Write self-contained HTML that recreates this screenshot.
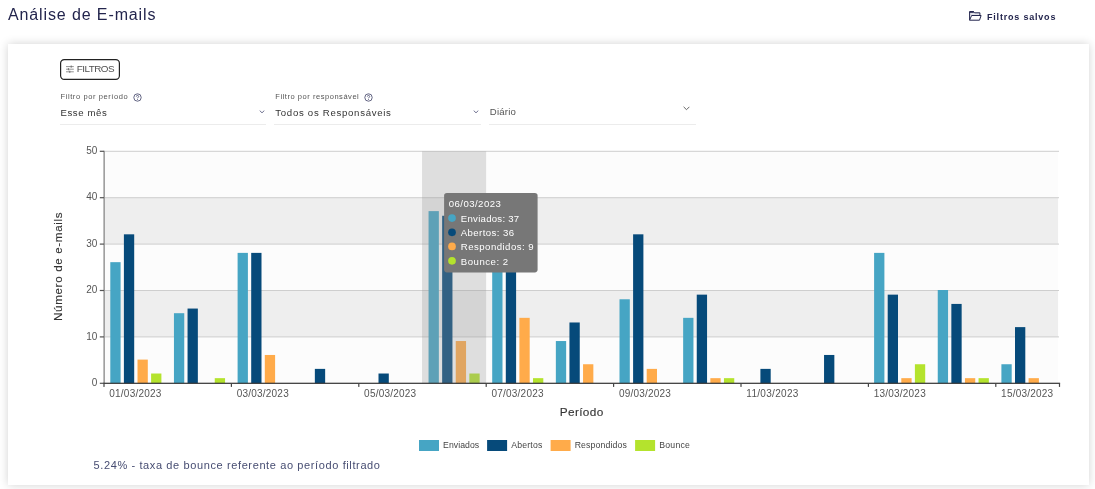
<!DOCTYPE html>
<html lang="pt-BR">
<head>
<meta charset="utf-8">
<title>Análise de E-mails</title>
<style>
html,body{margin:0;padding:0;background:#fff;}
body{width:1095px;height:489px;position:relative;overflow:hidden;font-family:"Liberation Sans", sans-serif;color:#333;}
#root{position:absolute;left:0;top:0;width:1095px;height:489px;will-change:transform;}
.abs{position:absolute;white-space:nowrap;line-height:1;}
h1.title{margin:0;font-weight:400;font-size:16px;color:#23254d;left:8px;top:7.3px;letter-spacing:0.882px}
.saved{left:969px;top:10px;height:12px;color:#23254d;}
.saved span{position:absolute;left:18px;top:3.1px;font-size:9px;font-weight:700;line-height:1;letter-spacing:0.798px}
.card{position:absolute;left:8px;top:44px;width:1081px;height:441px;background:#fff;box-shadow:0 0 9px rgba(0,0,0,.18);}
.btn{left:60px;top:59px;width:60px;height:21px;}
.btn span{position:absolute;left:16.7px;top:4.6px;font-size:9.9px;color:#505050;line-height:1;letter-spacing:-0.530px}
.lbl{font-size:7.5px;color:#555;}
.val{font-size:9.6px;color:#333;}
.ul{position:absolute;height:1px;background:#ececec;}
svg.chart{position:absolute;left:0;top:0;}
svg text{font-family:"Liberation Sans", sans-serif;}
.ax{font-size:10px;fill:#555;}
.ay{font-size:10px;fill:#555;}
.at{font-size:11.6px;fill:#333;stroke:#333;stroke-width:0.12px;}
.atx{font-size:11.8px;fill:#333;stroke:#333;stroke-width:0.12px;}
.lg{font-size:8.7px;fill:#444;}
.tt{font-size:9.6px;fill:#fff;}
.foot{left:93.5px;top:459.7px;font-size:11px;color:#474d72;letter-spacing:0.617px}
</style>
</head>
<body>
<div id="root">
<h1 class="abs title" id="title">Análise de E-mails</h1>
<div class="abs saved">
<svg width="13" height="11" viewBox="0 0 13 11" style="position:absolute;left:0;top:0.5px"><path d="M0.6 9.2V0.9h4.2l0.8 0.9h5.3v2.7h1.2l-1.6 4.7z" fill="#e3e3ea" stroke="none"/><path d="M0.6 4.5l2-0h9.5l-1.6 4.7H0.6z" fill="#fff" stroke="none"/><path d="M0.6 9.2V0.9h4.2l0.8 0.9h5.3v2.7M0.6 0.9h4.2" fill="none" stroke="#23254d" stroke-width="1" stroke-linejoin="round"/><path d="M0.6 9.2l2-4.7h9.5l-1.6 4.7z" fill="#fff" stroke="#23254d" stroke-width="1" stroke-linejoin="round"/><path d="M0.5 0.8h4.2" stroke="#23254d" stroke-width="1.4"/></svg>
<span id="saved">Filtros salvos</span>
</div>
<div class="card"></div>
<div class="abs btn">
<svg width="60" height="21" viewBox="0 0 60 21" style="position:absolute;left:0;top:0"><rect x="0.6" y="0.6" width="58.8" height="19.8" rx="3.6" ry="3.6" fill="#fff" stroke="#222" stroke-width="1.2"/><g stroke="#666" stroke-width="0.7" fill="none"><path d="M6 7.6h7.8M6 10.2h7.8M6 12.8h7.8"/><path d="M11.2 6.5v2.2M8.4 9.1v2.2M9.8 11.7v2.2" stroke-width="0.9"/></g></svg>
<span id="btn">FILTROS</span>
</div>

<div class="abs lbl" id="l1" style="left:60.5px;top:93.3px;letter-spacing:0.593px">Filtro por período</div>
<svg class="abs" width="9" height="9" viewBox="0 0 9 9" style="left:132.7px;top:92.8px"><circle cx="4.5" cy="4.5" r="3.7" fill="none" stroke="#3d4066" stroke-width="0.8"/><path d="M3.3 3.6c0-.8.6-1.2 1.2-1.2s1.2.4 1.2 1.1c0 .8-1.2.9-1.2 1.8M4.5 6.2v.8" fill="none" stroke="#3d4066" stroke-width="0.8"/></svg>
<div class="abs val" id="v1" style="left:60.5px;top:107.8px;letter-spacing:0.580px">Esse mês</div>
<svg class="abs" width="6" height="4" viewBox="0 0 6 4" style="left:258.6px;top:109.8px"><path d="M0.7 0.6L3 2.8l2.3-2.2" fill="none" stroke="#4a4d73" stroke-width="0.8"/></svg>
<div class="ul" style="left:60px;top:124px;width:206px"></div>

<div class="abs lbl" id="l2" style="left:275.3px;top:93.3px;letter-spacing:0.541px">Filtro por responsável</div>
<svg class="abs" width="9" height="9" viewBox="0 0 9 9" style="left:363.7px;top:92.8px"><circle cx="4.5" cy="4.5" r="3.7" fill="none" stroke="#3d4066" stroke-width="0.8"/><path d="M3.3 3.6c0-.8.6-1.2 1.2-1.2s1.2.4 1.2 1.1c0 .8-1.2.9-1.2 1.8M4.5 6.2v.8" fill="none" stroke="#3d4066" stroke-width="0.8"/></svg>
<div class="abs val" id="v2" style="left:275.3px;top:107.8px;letter-spacing:0.714px">Todos os Responsáveis</div>
<svg class="abs" width="6" height="4" viewBox="0 0 6 4" style="left:473.2px;top:109.8px"><path d="M0.7 0.6L3 2.8l2.3-2.2" fill="none" stroke="#4a4d73" stroke-width="0.8"/></svg>
<div class="ul" style="left:274px;top:124px;width:207px"></div>

<div class="abs val" id="v3" style="left:489.8px;top:107.2px;color:#555;letter-spacing:0.188px">Diário</div>
<svg class="abs" width="7" height="5" viewBox="0 0 7 5" style="left:683px;top:106px"><path d="M0.6 0.8L3.5 3.7l2.9-2.9" fill="none" stroke="#666" stroke-width="1"/></svg>
<div class="ul" style="left:489px;top:124px;width:207px"></div>

<svg class="chart" width="1095" height="489" viewBox="0 0 1095 489">
<rect x="104.0" y="151.30" width="954.10" height="46.40" fill="#fcfcfc"/>
<rect x="104.0" y="197.70" width="954.10" height="46.40" fill="#eeeeee"/>
<rect x="104.0" y="244.10" width="954.10" height="46.40" fill="#fcfcfc"/>
<rect x="104.0" y="290.50" width="954.10" height="46.40" fill="#eeeeee"/>
<rect x="104.0" y="336.90" width="954.10" height="46.40" fill="#fcfcfc"/>
<rect x="104.0" y="336.40" width="955.00" height="1" fill="#cecece"/>
<rect x="104.0" y="290.00" width="955.00" height="1" fill="#cecece"/>
<rect x="104.0" y="243.60" width="955.00" height="1" fill="#cecece"/>
<rect x="104.0" y="197.20" width="955.00" height="1" fill="#cecece"/>
<rect x="104.0" y="150.80" width="955.00" height="1" fill="#cecece"/>
<rect x="110.30" y="262.16" width="10.3" height="121.14" fill="#46a5c4"/>
<rect x="123.90" y="234.32" width="10.3" height="148.98" fill="#064a7a"/>
<rect x="137.50" y="359.60" width="10.3" height="23.70" fill="#ffab4a"/>
<rect x="151.10" y="373.52" width="10.3" height="9.78" fill="#b4e32d"/>
<rect x="173.95" y="313.20" width="10.3" height="70.10" fill="#46a5c4"/>
<rect x="187.55" y="308.56" width="10.3" height="74.74" fill="#064a7a"/>
<rect x="214.75" y="378.16" width="10.3" height="5.14" fill="#b4e32d"/>
<rect x="237.60" y="252.88" width="10.3" height="130.42" fill="#46a5c4"/>
<rect x="251.20" y="252.88" width="10.3" height="130.42" fill="#064a7a"/>
<rect x="264.80" y="354.96" width="10.3" height="28.34" fill="#ffab4a"/>
<rect x="314.85" y="368.88" width="10.3" height="14.42" fill="#064a7a"/>
<rect x="378.50" y="373.52" width="10.3" height="9.78" fill="#064a7a"/>
<rect x="428.55" y="211.12" width="10.3" height="172.18" fill="#46a5c4"/>
<rect x="442.15" y="215.76" width="10.3" height="167.54" fill="#064a7a"/>
<rect x="455.75" y="341.04" width="10.3" height="42.26" fill="#ffab4a"/>
<rect x="469.35" y="373.52" width="10.3" height="9.78" fill="#b4e32d"/>
<rect x="492.20" y="238.96" width="10.3" height="144.34" fill="#46a5c4"/>
<rect x="505.80" y="225.04" width="10.3" height="158.26" fill="#064a7a"/>
<rect x="519.40" y="317.84" width="10.3" height="65.46" fill="#ffab4a"/>
<rect x="533.00" y="378.16" width="10.3" height="5.14" fill="#b4e32d"/>
<rect x="555.85" y="341.04" width="10.3" height="42.26" fill="#46a5c4"/>
<rect x="569.45" y="322.48" width="10.3" height="60.82" fill="#064a7a"/>
<rect x="583.05" y="364.24" width="10.3" height="19.06" fill="#ffab4a"/>
<rect x="619.50" y="299.28" width="10.3" height="84.02" fill="#46a5c4"/>
<rect x="633.10" y="234.32" width="10.3" height="148.98" fill="#064a7a"/>
<rect x="646.70" y="368.88" width="10.3" height="14.42" fill="#ffab4a"/>
<rect x="683.15" y="317.84" width="10.3" height="65.46" fill="#46a5c4"/>
<rect x="696.75" y="294.64" width="10.3" height="88.66" fill="#064a7a"/>
<rect x="710.35" y="378.16" width="10.3" height="5.14" fill="#ffab4a"/>
<rect x="723.95" y="378.16" width="10.3" height="5.14" fill="#b4e32d"/>
<rect x="760.40" y="368.88" width="10.3" height="14.42" fill="#064a7a"/>
<rect x="824.05" y="354.96" width="10.3" height="28.34" fill="#064a7a"/>
<rect x="874.10" y="252.88" width="10.3" height="130.42" fill="#46a5c4"/>
<rect x="887.70" y="294.64" width="10.3" height="88.66" fill="#064a7a"/>
<rect x="901.30" y="378.16" width="10.3" height="5.14" fill="#ffab4a"/>
<rect x="914.90" y="364.24" width="10.3" height="19.06" fill="#b4e32d"/>
<rect x="937.75" y="290.00" width="10.3" height="93.30" fill="#46a5c4"/>
<rect x="951.35" y="303.92" width="10.3" height="79.38" fill="#064a7a"/>
<rect x="964.95" y="378.16" width="10.3" height="5.14" fill="#ffab4a"/>
<rect x="978.55" y="378.16" width="10.3" height="5.14" fill="#b4e32d"/>
<rect x="1001.40" y="364.24" width="10.3" height="19.06" fill="#46a5c4"/>
<rect x="1015.00" y="327.12" width="10.3" height="56.18" fill="#064a7a"/>
<rect x="1028.60" y="378.16" width="10.3" height="5.14" fill="#ffab4a"/>
<rect x="422.05" y="151.30" width="64.10" height="232.00" fill="#999" fill-opacity="0.3"/>
<rect x="103.40" y="150.80" width="1.5" height="232.50" fill="#969696"/>
<rect x="103.40" y="382.70" width="956.70" height="1.2" fill="#333"/>
<rect x="99.80" y="382.70" width="4.2" height="1.2" fill="#555"/>
<text x="97.3" y="385.90" text-anchor="end" class="ay">0</text>
<rect x="99.80" y="336.30" width="4.2" height="1.2" fill="#555"/>
<text x="97.3" y="339.50" text-anchor="end" class="ay">10</text>
<rect x="99.80" y="289.90" width="4.2" height="1.2" fill="#555"/>
<text x="97.3" y="293.10" text-anchor="end" class="ay">20</text>
<rect x="99.80" y="243.50" width="4.2" height="1.2" fill="#555"/>
<text x="97.3" y="246.70" text-anchor="end" class="ay">30</text>
<rect x="99.80" y="197.10" width="4.2" height="1.2" fill="#555"/>
<text x="97.3" y="200.30" text-anchor="end" class="ay">40</text>
<rect x="99.80" y="150.70" width="4.2" height="1.2" fill="#555"/>
<text x="97.3" y="153.90" text-anchor="end" class="ay">50</text>
<rect x="103.40" y="383.30" width="1.2" height="3.6" fill="#444"/>
<text x="109.30" y="396.5" class="ax" textLength="52" lengthAdjust="spacing">01/03/2023</text>
<rect x="230.80" y="383.30" width="1.2" height="3.6" fill="#444"/>
<text x="236.70" y="396.5" class="ax" textLength="52" lengthAdjust="spacing">03/03/2023</text>
<rect x="358.20" y="383.30" width="1.2" height="3.6" fill="#444"/>
<text x="364.10" y="396.5" class="ax" textLength="52" lengthAdjust="spacing">05/03/2023</text>
<rect x="485.60" y="383.30" width="1.2" height="3.6" fill="#444"/>
<text x="491.50" y="396.5" class="ax" textLength="52" lengthAdjust="spacing">07/03/2023</text>
<rect x="613.00" y="383.30" width="1.2" height="3.6" fill="#444"/>
<text x="618.90" y="396.5" class="ax" textLength="52" lengthAdjust="spacing">09/03/2023</text>
<rect x="740.40" y="383.30" width="1.2" height="3.6" fill="#444"/>
<text x="746.30" y="396.5" class="ax" textLength="52" lengthAdjust="spacing">11/03/2023</text>
<rect x="867.80" y="383.30" width="1.2" height="3.6" fill="#444"/>
<text x="873.70" y="396.5" class="ax" textLength="52" lengthAdjust="spacing">13/03/2023</text>
<rect x="995.20" y="383.30" width="1.2" height="3.6" fill="#444"/>
<text x="1001.10" y="396.5" class="ax" textLength="52" lengthAdjust="spacing">15/03/2023</text>
<rect x="1058.90" y="383.30" width="1.2" height="3.6" fill="#444"/>
<text x="581.5" y="416.2" text-anchor="middle" class="atx" textLength="43.5" lengthAdjust="spacing">Período</text>
<text transform="translate(61.6,266.7) rotate(-90)" text-anchor="middle" class="at" textLength="108.5" lengthAdjust="spacing">Número de e-mails</text>
<rect x="419" y="440" width="20" height="11" fill="#46a5c4"/>
<text x="443.1" y="447.9" class="lg" textLength="36" lengthAdjust="spacing">Enviados</text>
<rect x="487.1" y="440" width="20" height="11" fill="#064a7a"/>
<text x="511.3" y="447.9" class="lg" textLength="31" lengthAdjust="spacing">Abertos</text>
<rect x="550.6" y="440" width="20" height="11" fill="#ffab4a"/>
<text x="574.7" y="447.9" class="lg" textLength="52.2" lengthAdjust="spacing">Respondidos</text>
<rect x="635.1" y="440" width="20" height="11" fill="#b4e32d"/>
<text x="659.3" y="447.9" class="lg" textLength="30.5" lengthAdjust="spacing">Bounce</text>
<rect x="444.1" y="193.1" width="93.5" height="79.3" rx="2.8" ry="2.8" fill="#777"/>
<text x="448.8" y="207.1" class="tt" textLength="52" lengthAdjust="spacing">06/03/2023</text>
<circle cx="452" cy="218.1" r="3.85" fill="#46a5c4"/>
<text x="460.8" y="222.0" class="tt" textLength="58.4" lengthAdjust="spacing">Enviados: 37</text>
<circle cx="452" cy="232.3" r="3.85" fill="#064a7a"/>
<text x="460.8" y="236.2" class="tt" textLength="53.2" lengthAdjust="spacing">Abertos: 36</text>
<circle cx="452" cy="246.4" r="3.85" fill="#ffab4a"/>
<text x="460.8" y="250.3" class="tt" textLength="72.8" lengthAdjust="spacing">Respondidos: 9</text>
<circle cx="452" cy="260.8" r="3.85" fill="#b4e32d"/>
<text x="460.8" y="264.7" class="tt" textLength="47.3" lengthAdjust="spacing">Bounce: 2</text>
</svg>
<div class="abs foot" id="foot">5.24% - taxa de bounce referente ao período filtrado</div>
</div>
</body>
</html>
